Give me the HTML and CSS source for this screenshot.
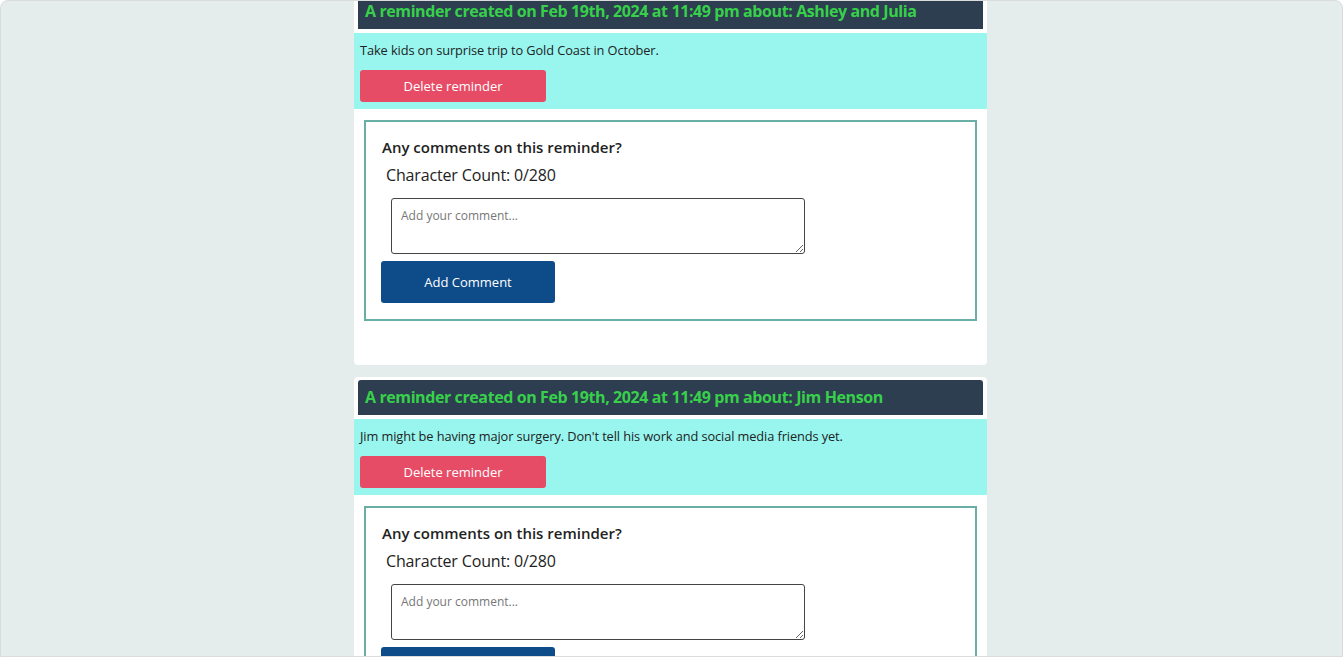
FILE: index.html
```html
<!DOCTYPE html>
<html lang="en">
<head>
<meta charset="utf-8">
<title>Reminders</title>
<link rel="stylesheet" href="styles.css">
</head>
<body>
<div class="frame">
  <main class="list">
    <section class="card">
      <h2 class="card-title">A reminder created on Feb 19th, 2024 at 11:49 pm about: Ashley and Julia</h2>
      <div class="band">
        <p class="band-text">Take kids on surprise trip to Gold Coast in October.</p>
        <button class="btn-delete">Delete reminder</button>
      </div>
      <form class="comments">
        <h3 class="comments-title">Any comments on this reminder?</h3>
        <p class="count">Character Count: 0/280</p>
        <textarea class="comment-input" placeholder="Add your comment..."></textarea>
        <button type="button" class="btn-add">Add Comment</button>
      </form>
    </section>
    <section class="card">
      <h2 class="card-title">A reminder created on Feb 19th, 2024 at 11:49 pm about: Jim Henson</h2>
      <div class="band">
        <p class="band-text">Jim might be having major surgery. Don't tell his work and social media friends yet.</p>
        <button class="btn-delete">Delete reminder</button>
      </div>
      <form class="comments">
        <h3 class="comments-title">Any comments on this reminder?</h3>
        <p class="count">Character Count: 0/280</p>
        <textarea class="comment-input" placeholder="Add your comment..."></textarea>
        <button type="button" class="btn-add">Add Comment</button>
      </form>
    </section>
  </main>
</div>
</body>
</html>
```

FILE: styles.css
```css
* { box-sizing: border-box; }
html, body {
  margin: 0;
  padding: 0;
  background: #ffffff;
  font-family: "Open Sans", "Noto Sans", sans-serif;
}
.frame {
  height: 657px;
  border: 1px solid #d9dcdb;
  border-radius: 8px 8px 0 0;
  background: #e4edeb;
  overflow: hidden;
  padding-right: 2px;
}
.list {
  width: 633px;
  margin: -10px auto 0;
  display: flex;
  flex-direction: column;
  gap: 12px;
}
.card {
  background: #ffffff;
  border-radius: 4px;
  padding: 3px 0 44px;
}
.card-title {
  margin: 0 4px;
  height: 35px;
  padding: 0 7px;
  background: #2c3e50;
  border-radius: 3px 3px 0 0;
  color: #38d04b;
  font-size: 16px;
  font-weight: 700;
  line-height: 35px;
  letter-spacing: -0.4px;
  white-space: nowrap;
}
.band {
  margin-top: 4px;
  background: #98f6ef;
  padding: 8px 6px 7px;
}
.band-text {
  margin: 0;
  font-size: 12.8px;
  line-height: 18px;
  color: #222;
  letter-spacing: -0.1px;
}
.btn-delete {
  margin-top: 11px;
  display: block;
  width: 186px;
  height: 32px;
  border: none;
  border-radius: 3px;
  background: #e74c67;
  color: #ffffff;
  font-family: inherit;
  font-size: 13px;
}
.comments {
  margin: 11px 10px 0;
  border: 2px solid #6aafa6;
  padding: 15px 15px 16px;
  display: flex;
  flex-direction: column;
  align-items: flex-start;
}
.comments-title {
  margin: 0 0 0 1px;
  font-size: 15px;
  font-weight: 600;
  line-height: 20px;
  color: #222;
}
.count {
  margin: 6px 0 0 5px;
  font-size: 16px;
  line-height: 24px;
  color: #222;
  letter-spacing: -0.15px;
}
.comment-input {
  margin: 11px 0 0 10px;
  width: 414px;
  height: 56px;
  border: 1px solid #444;
  border-radius: 3px;
  padding: 8px 9px;
  font-family: inherit;
  font-size: 12px;
  resize: vertical;
}
.comment-input::placeholder { color: #777; }
.btn-add {
  margin-top: 7px;
  width: 174px;
  height: 42px;
  border: none;
  border-radius: 3px;
  background: #0e4b89;
  color: #ffffff;
  font-family: inherit;
  font-size: 13px;
}
```
